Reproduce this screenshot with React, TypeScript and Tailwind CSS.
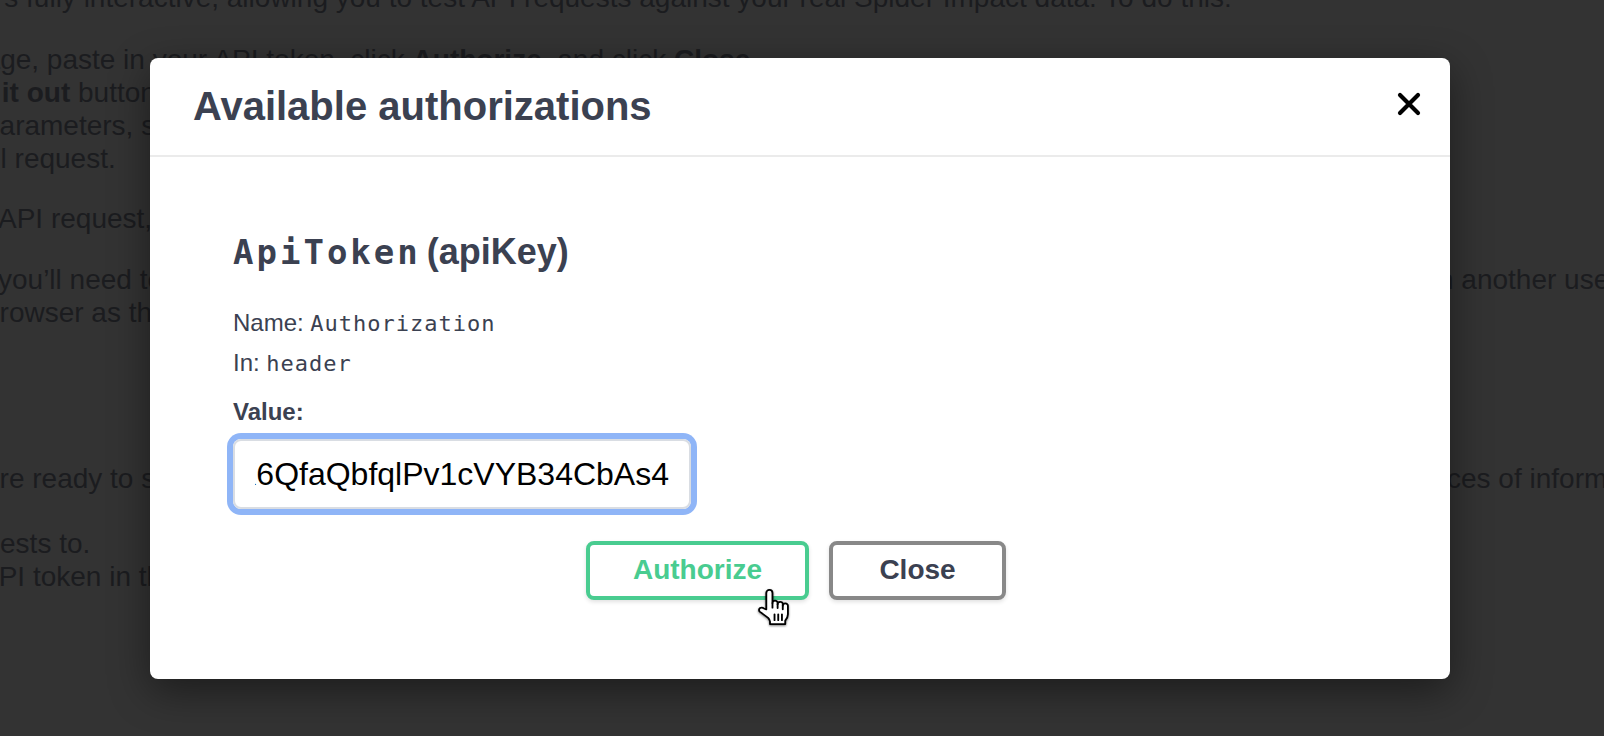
import React from 'react';

const monoFont = "font-['DejaVu_Sans_Mono',monospace]";

function BackgroundDocs() {
  // docs page sitting behind the overlay, mostly hidden by the modal
  return (
    <div className="whitespace-nowrap text-[28px] leading-[33px] text-[#1b1c1f]">
      <p className="-ml-[17px] -mt-[19px]">
        It’s fully interactive, allowing you to test API requests against your real Spider Impact data. To do this:
      </p>
      <p className="-ml-[31px] mt-[29px]">
        page, paste in your API token, click <b>Authorize</b>, and click <b>Close</b>.
      </p>
      <p className="-ml-[48px]">
        <b>Try it out</b> button on the request that you want to make.
      </p>
      <p className="-ml-[16px]">parameters, set the values you would like to send with the</p>
      <p className="-ml-[29px]">full request.</p>
      <p className="-ml-[2px] mt-[27px]">API request, you can see the response body and headers below.</p>
      <div className="-ml-[2px] mt-[28px] flex">
        <span className="w-[1440px] shrink-0 overflow-hidden">you’ll need to log out of Spider Impact first, or open this page i</span>
        <span>n another user’s browser</span>
      </div>
      <p className="-ml-[16px]">browser as the user you want to test with.</p>
      <div className="-ml-[16px] mt-[133px] flex">
        <span className="w-[1463px] shrink-0 overflow-hidden">are ready to start building your integration, the most common pie</span>
        <span>ces of information</span>
      </div>
      <p className="-ml-[56px] mt-[32px]">requests to.</p>
      <p className="-ml-[20px]">API token in the Authorization header.</p>
    </div>
  );
}

function HandCursor() {
  return (
    <svg
      viewBox="0 0 17 19"
      className="h-[37px] w-[35px] drop-shadow-[0_1px_1px_rgba(0,0,0,0.5)]"
      preserveAspectRatio="none"
      fill="white"
      stroke="black"
      strokeWidth="0.9"
      strokeLinejoin="round"
    >
      <path d="M5 10.5V2a1.5 1.5 0 0 1 3 0V7.2a1.25 1.25 0 0 1 2.5 0v.6a1.25 1.25 0 0 1 2.5 0v.8a1.25 1.25 0 0 1 2.5 0V13c0 1.4-.5 2.3-1.3 3.2V18H6.8v-1.3c0-.6-.4-1.3-.9-1.9L1.8 11.6c-.5-.6-.4-1.4.2-1.8.6-.4 1.3-.3 1.8.2Z" />
      <path d="M8 7.2v2.4M10.5 7.8v2M13 8.6v1.8M9 13v3M10.8 13v3M12.6 13v3" fill="none" strokeLinecap="round" />
    </svg>
  );
}

function AuthModal() {
  return (
    <div className="mr-[4px] w-[1300px] overflow-hidden rounded-[8px] bg-white shadow-[0_12px_40px_rgba(0,0,0,0.45)]">
      <div className="flex h-[99px] items-center justify-between border-b-2 border-[#ebebeb] pl-[43px]">
        <h3 className="text-[40px] font-bold text-[#3b4151]">Available authorizations</h3>
        <button className="mb-[5px] mr-[29px]" aria-label="Close">
          <svg viewBox="0 0 24 24" className="h-[24px] w-[24px]" stroke="black" strokeWidth="4.2" strokeLinecap="round">
            <path d="M3 3L21 21M21 3L3 21" />
          </svg>
        </button>
      </div>

      <div className="pb-[79px] pl-[83px] pr-[81px] pt-[73px] text-[#3b4151]">
        <h4 className="flex items-baseline gap-[6px] leading-[44px]">
          <code className={`${monoFont} text-[34px] font-bold tracking-[3px]`}>ApiToken</code>
          <span className="text-[36px] font-bold">(apiKey)</span>
        </h4>

        <div className="mt-[29px] text-[24px] leading-[40px]">
          Name: <code className={`${monoFont} text-[22px] leading-none tracking-[1px]`}>Authorization</code>
        </div>
        <div className="text-[24px] leading-[40px]">
          In: <code className={`${monoFont} text-[22px] leading-none tracking-[1px]`}>header</code>
        </div>

        <label className="mt-[14px] block text-[24px] font-bold leading-[30px]">Value:</label>
        <div className="mt-[12px] flex h-[70px] w-[458px] items-center rounded-[8px] border-2 border-[#d9dde3] px-[20px] shadow-[0_0_0_6px_#8fb5f7]">
          <div className="flex min-w-0 flex-1 justify-end overflow-hidden whitespace-nowrap text-[32px] text-black">
            eyJhbGciOiJIUzI1NiJ9.eyJ1c2VyIjoiYXBpIn0.dK6QfaQbfqlPv1cVYB34CbAs4
          </div>
        </div>

        <div className="mt-[32px] flex justify-center gap-[20px] pr-[10px]">
          <div className="relative">
            <button className="h-[59px] w-[223px] rounded-[8px] border-4 border-[#49cc90] bg-white text-[28px] font-bold text-[#49cc90] shadow-[0_2px_4px_rgba(0,0,0,0.12)]">
              Authorize
            </button>
            <div className="absolute left-[170px] top-[48px]">
              <HandCursor />
            </div>
          </div>
          <button className="h-[59px] w-[177px] rounded-[8px] border-4 border-[#888888] bg-white text-[28px] font-bold text-[#3b4151] shadow-[0_2px_4px_rgba(0,0,0,0.12)]">
            Close
          </button>
        </div>
      </div>
    </div>
  );
}

export default function App() {
  return (
    <div className="relative h-[736px] overflow-hidden bg-[#333333] font-['Liberation_Sans',Arial,Helvetica,sans-serif]">
      <BackgroundDocs />
      <div className="absolute inset-0 flex items-center justify-center">
        <AuthModal />
      </div>
    </div>
  );
}
